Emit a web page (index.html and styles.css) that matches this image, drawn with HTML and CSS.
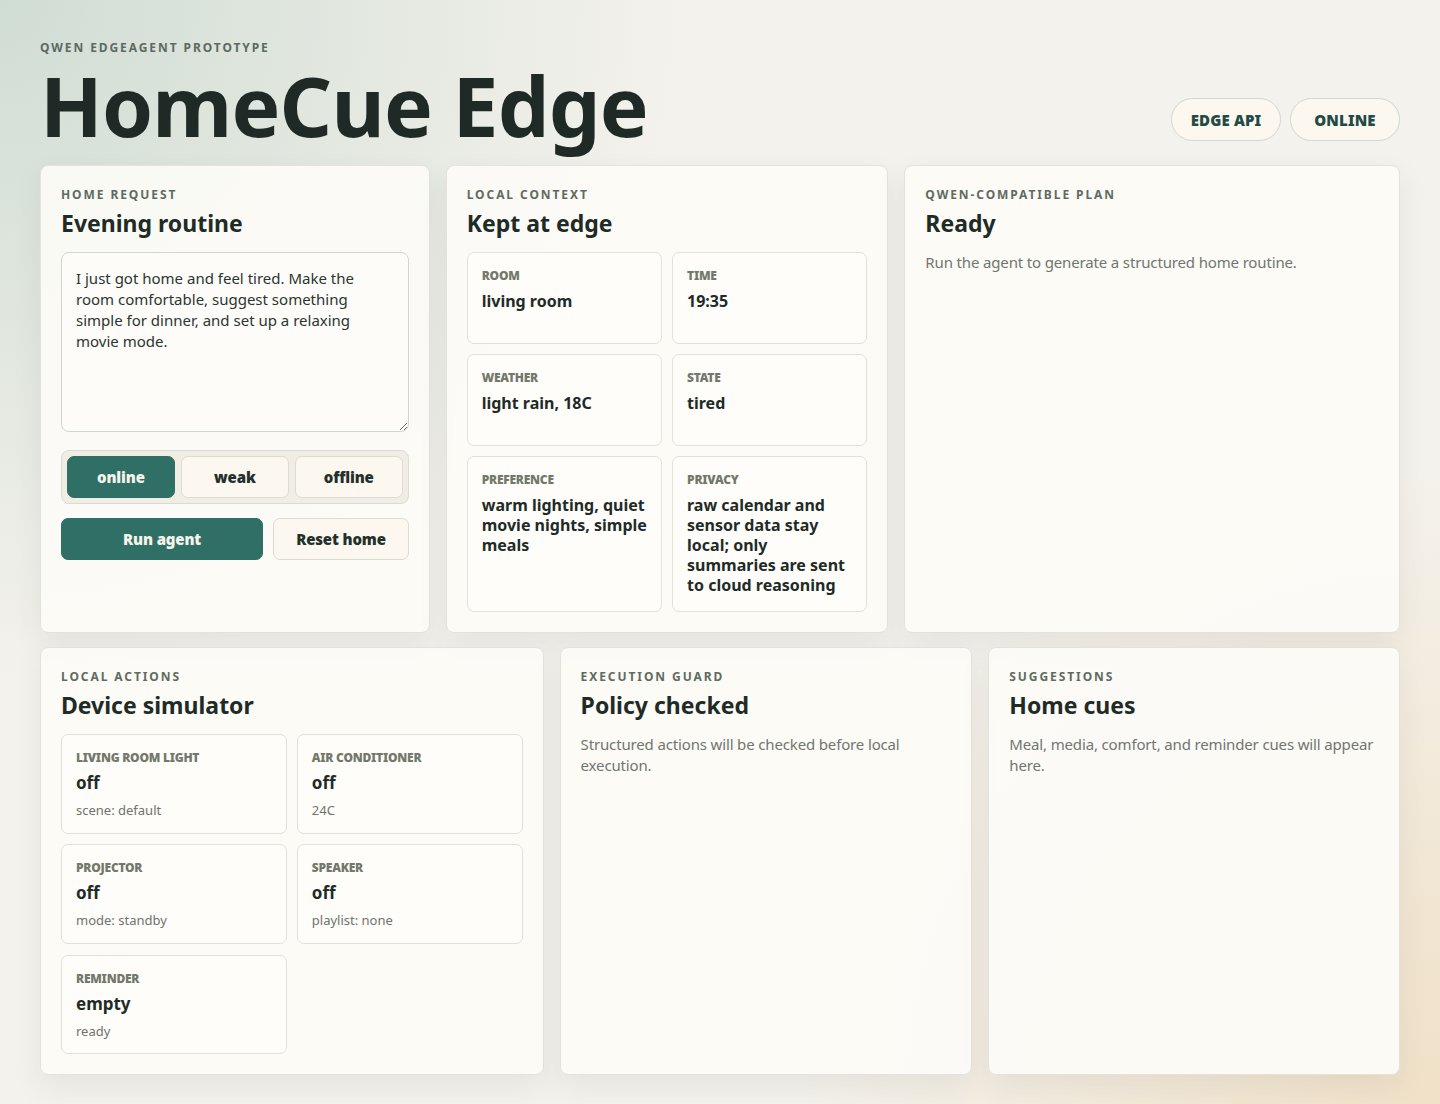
FILE: index.html
```html
<!DOCTYPE html>
<html lang="en">
<head>
<meta charset="utf-8">
<title>HomeCue Edge</title>
<link rel="stylesheet" href="styles.css">
</head>
<body>
<main class="page">
  <header class="topbar">
    <div class="brand">
      <p class="eyebrow">Qwen EdgeAgent prototype</p>
      <h1 class="title">HomeCue Edge</h1>
    </div>
    <div class="pills">
      <span class="pill">EDGE API</span>
      <span class="pill">ONLINE</span>
    </div>
  </header>

  <section class="row row-top">
    <article class="card">
      <p class="eyebrow small">Home request</p>
      <h2 class="card-title">Evening routine</h2>
      <textarea class="request">I just got home and feel tired. Make the room comfortable, suggest something simple for dinner, and set up a relaxing movie mode.</textarea>
      <div class="segmented">
        <button class="seg active">online</button>
        <button class="seg">weak</button>
        <button class="seg">offline</button>
      </div>
      <div class="actions">
        <button class="btn primary">Run agent</button>
        <button class="btn ghost">Reset home</button>
      </div>
    </article>

    <article class="card">
      <p class="eyebrow small">Local context</p>
      <h2 class="card-title">Kept at edge</h2>
      <div class="tiles ctx">
        <div class="tile"><span class="tile-label">Room</span><span class="tile-value">living room</span></div>
        <div class="tile"><span class="tile-label">Time</span><span class="tile-value">19:35</span></div>
        <div class="tile"><span class="tile-label">Weather</span><span class="tile-value">light rain, 18C</span></div>
        <div class="tile"><span class="tile-label">State</span><span class="tile-value">tired</span></div>
        <div class="tile"><span class="tile-label">Preference</span><span class="tile-value">warm lighting, quiet movie nights, simple meals</span></div>
        <div class="tile"><span class="tile-label">Privacy</span><span class="tile-value">raw calendar and sensor data stay local; only summaries are sent to cloud reasoning</span></div>
      </div>
    </article>

    <article class="card">
      <p class="eyebrow small">Qwen-compatible plan</p>
      <h2 class="card-title">Ready</h2>
      <p class="muted">Run the agent to generate a structured home routine.</p>
    </article>
  </section>

  <section class="row row-bottom">
    <article class="card">
      <p class="eyebrow small">Local actions</p>
      <h2 class="card-title">Device simulator</h2>
      <div class="tiles devices">
        <div class="tile"><span class="tile-label">Living room light</span><span class="tile-value">off</span><span class="tile-note">scene: default</span></div>
        <div class="tile"><span class="tile-label">Air conditioner</span><span class="tile-value">off</span><span class="tile-note">24C</span></div>
        <div class="tile"><span class="tile-label">Projector</span><span class="tile-value">off</span><span class="tile-note">mode: standby</span></div>
        <div class="tile"><span class="tile-label">Speaker</span><span class="tile-value">off</span><span class="tile-note">playlist: none</span></div>
        <div class="tile"><span class="tile-label">Reminder</span><span class="tile-value">empty</span><span class="tile-note">ready</span></div>
      </div>
    </article>

    <article class="card">
      <p class="eyebrow small">Execution guard</p>
      <h2 class="card-title">Policy checked</h2>
      <p class="muted">Structured actions will be checked before local execution.</p>
    </article>

    <article class="card">
      <p class="eyebrow small">Suggestions</p>
      <h2 class="card-title">Home cues</h2>
      <p class="muted">Meal, media, comfort, and reminder cues will appear here.</p>
    </article>
  </section>
</main>
</body>
</html>
```

FILE: styles.css
```css
* {
  box-sizing: border-box;
}

html, body {
  margin: 0;
  min-height: 100%;
}

body {
  min-height: 100vh;
  font-family: "Noto Sans", "Open Sans", sans-serif;
  color: #1f2b27;
  background:
    radial-gradient(circle at 0% 0%, rgba(196, 214, 204, 0.75) 0%, rgba(196, 214, 204, 0) 38%),
    radial-gradient(circle at 100% 100%, rgba(240, 220, 190, 0.8) 0%, rgba(240, 220, 190, 0) 35%),
    #f4f2ec;
}

.page {
  padding: 40px 40px 28px;
  display: flex;
  flex-direction: column;
  gap: 16px;
}

/* header */
.topbar {
  display: flex;
  justify-content: space-between;
  align-items: flex-end;
}

.eyebrow {
  margin: 0;
  font-size: 12px;
  line-height: 16px;
  font-weight: 700;
  letter-spacing: 0.16em;
  text-transform: uppercase;
  color: #5c6a5f;
}

.title {
  margin: 5px 0 0;
  font-size: 82px;
  line-height: 88px;
  font-weight: 700;
  letter-spacing: -0.01em;
  color: #1f2a26;
}

.pills {
  display: flex;
  gap: 9px;
  margin-bottom: 8px;
}

.pill {
  display: inline-flex;
  align-items: center;
  justify-content: center;
  width: 110px;
  height: 43px;
  border-radius: 999px;
  border: 1px solid #cfd8cf;
  background: #fcf8ef;
  font-family: "Noto Sans", sans-serif;
  font-size: 15px;
  font-weight: 900;
  letter-spacing: 0.01em;
  color: #234a45;
}

/* card rows */
.row {
  display: grid;
  gap: 16px;
}

.row-top {
  grid-template-columns: 390fr 443fr 496fr;
  height: 466px;
}

.row-bottom {
  grid-template-columns: 504fr 413fr 412fr;
  height: 427px;
}

.card {
  background: rgba(252, 251, 247, 0.94);
  border: 1px solid #e4e2da;
  border-radius: 8px;
  padding: 21px 20px 20px;
  box-shadow: 0 12px 30px rgba(60, 70, 60, 0.08);
  display: flex;
  flex-direction: column;
  align-items: stretch;
}

.eyebrow.small {
  font-size: 12px;
  letter-spacing: 0.16em;
  color: #5f6b62;
  line-height: 16px;
}

.card-title {
  margin: 4px 0 13px;
  font-size: 23px;
  line-height: 32px;
  font-weight: 700;
  color: #1f2b27;
}

.muted {
  margin: 0;
  font-size: 15px;
  line-height: 21px;
  letter-spacing: -0.01em;
  color: #707670;
}

/* request form */
.request {
  height: 180px;
  resize: vertical;
  width: 100%;
  padding: 15px 14px 14px;
  border: 1px solid #cfd6d0;
  border-radius: 8px;
  background: #fdfcf8;
  font-family: inherit;
  font-size: 15px;
  line-height: 21px;
  color: #2b3531;
}

.segmented {
  margin-top: 18px;
  display: grid;
  grid-template-columns: repeat(3, 1fr);
  gap: 6px;
  padding: 5px;
  border: 1px solid #dcdbd2;
  border-radius: 8px;
  background: #efede4;
}

.seg, .btn {
  font-family: "Noto Sans", sans-serif;
  font-size: 15px;
  font-weight: 900;
  height: 42px;
  border-radius: 7px;
  cursor: pointer;
  letter-spacing: -0.01em;
}

.seg {
  border: 1px solid #dcdbd2;
  background: #fcf8ef;
  color: #24302c;
}

.seg.active {
  background: #2f6f66;
  border-color: #2f6f66;
  color: #f6f3ea;
}

.actions {
  margin-top: 14px;
  display: grid;
  grid-template-columns: 203fr 136fr;
  gap: 10px;
}

.btn.primary {
  border: 1px solid #2f6f66;
  background: #2f6f66;
  color: #f6f3ea;
}

.btn.ghost {
  border: 1px solid #dcdbd2;
  background: #fcf8ef;
  color: #24302c;
}

/* tiles */
.tiles {
  display: grid;
  grid-template-columns: 1fr 1fr;
  gap: 10px;
}

.ctx {
  grid-template-rows: 92px 92px 156px;
}

.devices {
  grid-template-rows: 100px 100px 100px;
  gap: 10px 10px;
}

.devices .tile:nth-child(5) {
  margin-top: 1px;
}

.tile {
  background: #fefdfa;
  border: 1px solid #e0e2dc;
  border-radius: 7px;
  padding: 16px 14px 12px;
  display: flex;
  flex-direction: column;
}

.tile-label {
  font-size: 12px;
  line-height: 14px;
  font-weight: 900;
  text-transform: uppercase;
  letter-spacing: -0.02em;
  color: #72786a;
}

.tile-value {
  margin-top: 8px;
  font-size: 16px;
  line-height: 20px;
  font-weight: 700;
  color: #1f2b27;
}

.devices .tile-value {
  font-size: 17px;
  line-height: 24px;
  margin-top: 6px;
}

.tile-note {
  margin-top: 6px;
  font-size: 13px;
  line-height: 18px;
  color: #6f736d;
}
```
